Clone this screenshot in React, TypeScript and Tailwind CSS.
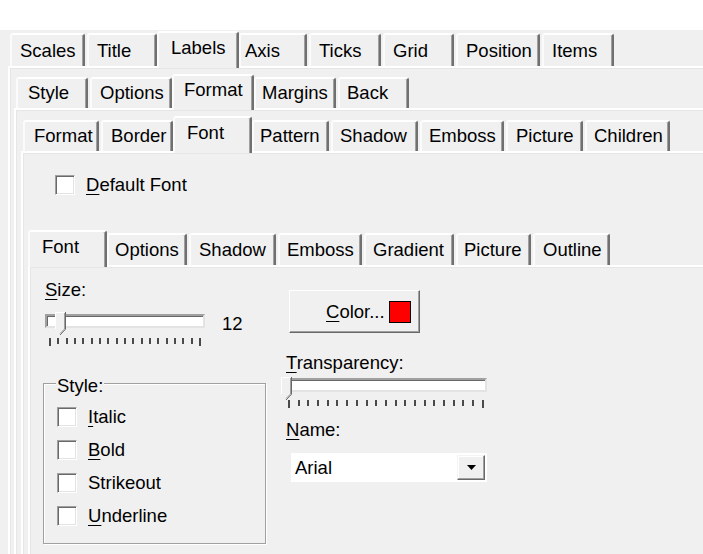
import React from 'react';

type TabDef = { label: string; cls: string; sel?: boolean };

const TAB =
  "relative shrink-0 flex flex-col justify-end whitespace-nowrap leading-[21px] rounded-t-[3px] border-t-2 border-l-2 border-r-2 border-t-white border-l-[#fbfbfb] border-r-[#707070] shadow-[inset_-1px_0_0_#a0a0a0] bg-[#f0f0f0]";

function TabStrip({ tabs, h, unsel, sel }: { tabs: TabDef[]; h: string; unsel: string; sel: string }) {
  return (
    <div className={`flex items-end ${h}`}>
      {tabs.map((t) => (
        <div
          key={t.label}
          className={`${TAB} ${t.cls} ${t.sel ? `z-10 -mb-[2px] pb-[10px] ${sel}` : `pb-[5px] ${unsel}`}`}
        >
          <span>{t.label}</span>
        </div>
      ))}
    </div>
  );
}

const row1: TabDef[] = [
  { label: 'Scales', cls: 'ml-[2px] w-[75px] pl-[8px]' },
  { label: 'Title', cls: 'ml-[2px] w-[70px] pl-[8px]' },
  { label: 'Labels', cls: 'ml-0 w-[82px] pl-[12px]', sel: true },
  { label: 'Axis', cls: 'ml-0 w-[68px] pl-[4px]' },
  { label: 'Ticks', cls: 'ml-[2px] w-[72px] pl-[8px]' },
  { label: 'Grid', cls: 'ml-[2px] w-[71px] pl-[8px]' },
  { label: 'Position', cls: 'ml-[2px] w-[84px] pl-[8px]' },
  { label: 'Items', cls: 'ml-[2px] w-[72px] pl-[8px]' },
];

const row2: TabDef[] = [
  { label: 'Style', cls: 'ml-[2px] w-[72px] pl-[10px]' },
  { label: 'Options', cls: 'ml-[2px] w-[82px] pl-[8px]' },
  { label: 'Format', cls: 'ml-0 w-[82px] pl-[10px]', sel: true },
  { label: 'Margins', cls: 'ml-0 w-[82px] pl-[6px]' },
  { label: 'Back', cls: 'ml-[2px] w-[71px] pl-[7px]' },
];

const row3: TabDef[] = [
  { label: 'Format', cls: 'ml-[2px] w-[76px] pl-[9px]' },
  { label: 'Border', cls: 'ml-[2px] w-[72px] pl-[8px]' },
  { label: 'Font', cls: 'ml-0 w-[79px] pl-[12px]', sel: true },
  { label: 'Pattern', cls: 'ml-0 w-[77px] pl-[6px]' },
  { label: 'Shadow', cls: 'ml-[2px] w-[87px] pl-[7px]' },
  { label: 'Emboss', cls: 'ml-[2px] w-[84px] pl-[7px]' },
  { label: 'Picture', cls: 'ml-[2px] w-[77px] pl-[8px]' },
  { label: 'Children', cls: 'ml-[2px] w-[85px] pl-[7px]' },
];

const row4: TabDef[] = [
  { label: 'Font', cls: 'ml-0 w-[79px] pl-[12px]', sel: true },
  { label: 'Options', cls: 'ml-0 w-[80px] pl-[6px]' },
  { label: 'Shadow', cls: 'ml-[2px] w-[87px] pl-[8px]' },
  { label: 'Emboss', cls: 'ml-[2px] w-[84px] pl-[7px]' },
  { label: 'Gradient', cls: 'ml-[2px] w-[90px] pl-[7px]' },
  { label: 'Picture', cls: 'ml-[2px] w-[75px] pl-[6px]' },
  { label: 'Outline', cls: 'ml-[2px] w-[77px] pl-[8px]' },
];

const PANEL =
  "w-[720px] h-[620px] border-t-2 border-l-2 border-t-white border-l-white shadow-[inset_1px_1px_0_#e6e6e6]";

function Mn({ text, i }: { text: string; i: number }) {
  return (
    <span className="whitespace-nowrap">
      {text.slice(0, i)}
      <span className="underline underline-offset-[3px] decoration-1">{text[i]}</span>
      {text.slice(i + 1)}
    </span>
  );
}

function CheckBox({ children, gap }: { children: React.ReactNode; gap: string }) {
  return (
    <div className="flex items-start h-[21px] leading-[21px]">
      <div className="mt-[1px] w-[20px] h-[20px] shrink-0 bg-white border border-t-[#a0a0a0] border-l-[#a0a0a0] border-b-white border-r-white shadow-[inset_1px_1px_0_#696969,inset_-1px_-1px_0_#e3e3e3]" />
      <div className={gap}>{children}</div>
    </div>
  );
}

function Thumb({ pos }: { pos: string }) {
  return (
    <svg className={`absolute ${pos}`} width="11" height="24" viewBox="0 0 11 24">
      <polygon points="0,0 10,0 10,17 5,22 0,17" fill="#f0f0f0" />
      <polyline points="0.5,17 0.5,0.5 10,0.5" fill="none" stroke="#ffffff" />
      <polyline points="9.5,1 9.5,17 5,21.5" fill="none" stroke="#a0a0a0" />
      <polyline points="10.5,0 10.5,17.2 5,23" fill="none" stroke="#696969" />
    </svg>
  );
}

function Track({ cls, thumb }: { cls: string; thumb: string }) {
  return (
    <div
      className={`relative h-[14px] bg-white border-2 border-t-[#a0a0a0] border-l-[#a0a0a0] border-b-[#e3e3e3] border-r-[#e3e3e3] shadow-[inset_1px_1px_0_#696969] ${cls}`}
    >
      <Thumb pos={thumb} />
    </div>
  );
}

function Ticks({ n, cls }: { n: number; cls: string }) {
  return (
    <div className={`flex justify-between items-start h-[8px] ${cls}`}>
      {Array.from({ length: n }).map((_, k) => (
        <div
          key={k}
          className={
            k === 0 || k === n - 1 ? 'w-[2px] h-[8px] bg-[#4a4a4a]' : 'w-[2px] h-[6px] bg-[#4a4a4a]'
          }
        />
      ))}
    </div>
  );
}

export default function App() {
  return (
    <div className="w-[703px] h-[554px] overflow-hidden bg-[#f0f0f0] text-black text-[18.5px] leading-[21px] font-['Liberation_Sans',Arial,sans-serif]">
      <div className="h-[30px] bg-white" />
      <div className="h-[1px]" />
      <div className="pl-[8px]">
        <TabStrip tabs={row1} h="h-[35px]" unsel="h-[33px]" sel="h-[37px]" />
        <div className={`${PANEL} pl-[4px] pt-[6px]`}>
          <TabStrip tabs={row2} h="h-[34px]" unsel="h-[31px]" sel="h-[36px]" />
          <div className={`${PANEL} pl-[5px] pt-[6px]`}>
            <TabStrip tabs={row3} h="h-[35px]" unsel="h-[31px]" sel="h-[37px]" />
            <div className={`${PANEL} pl-[5px] pt-[21px]`}>
              <div className="ml-[27px]">
                <CheckBox gap="ml-[11px]">
                  <Mn text="Default Font" i={0} />
                </CheckBox>
              </div>
              <div className="mt-[35px]">
                <TabStrip tabs={row4} h="h-[35px]" unsel="h-[32px]" sel="h-[37px]" />
              </div>
              <div className={`${PANEL} pl-[13px]`}>
                <div className="flex">
                  {/* left column */}
                  <div className="w-[223px] pt-[12px]">
                    <div className="ml-[2px] h-[21px]">
                      <Mn text="Size:" i={0} />
                    </div>
                    <div className="mt-[13px] flex items-start h-[21px]">
                      <Track cls="ml-[2px] mt-[1px] w-[160px]" thumb="left-[8px] top-[-4px]" />
                      <span className="ml-[17px]">12</span>
                    </div>
                    <Ticks n={19} cls="mt-[4px] ml-[6px] w-[152px]" />
                    <div className="relative mt-[37px] w-[223px] h-[161px] border border-[#a0a0a0] shadow-[inset_1px_1px_0_#ffffff,1px_1px_0_#ffffff] pl-[13px] pt-[22px]">
                      <span className="absolute left-[12px] top-[-9px] px-[1px] bg-[#f0f0f0] leading-[21px]">
                        Style:
                      </span>
                      <div className="flex flex-col gap-[12px]">
                        <CheckBox gap="ml-[11px]">
                          <Mn text="Italic" i={0} />
                        </CheckBox>
                        <CheckBox gap="ml-[11px]">
                          <Mn text="Bold" i={0} />
                        </CheckBox>
                        <CheckBox gap="ml-[11px]">
                          <span>Strikeout</span>
                        </CheckBox>
                        <CheckBox gap="ml-[11px]">
                          <Mn text="Underline" i={0} />
                        </CheckBox>
                      </div>
                    </div>
                  </div>
                  {/* right column */}
                  <div className="ml-[20px] pt-[23px] w-[210px]">
                    <div className="ml-[3px] w-[131px] h-[43px] flex items-center pl-[36px] border border-t-white border-l-white border-r-[#696969] border-b-[#696969] shadow-[inset_-1px_-1px_0_#a0a0a0] bg-[#f0f0f0]">
                      <Mn text="Color..." i={0} />
                      <div className="ml-[4px] w-[22px] h-[22px] border border-black bg-[#ff0000]" />
                    </div>
                    <div className="mt-[19px] h-[21px]">
                      <Mn text="Transparency:" i={0} />
                    </div>
                    <Track cls="mt-[5px] w-[201px]" thumb="left-[-7px] top-[-3px]" />
                    <Ticks n={21} cls="mt-[8px] ml-[2px] w-[196px]" />
                    <div className="mt-[11px] h-[21px]">
                      <Mn text="Name:" i={0} />
                    </div>
                    <div className="mt-[13px] ml-[5px] w-[196px] h-[29px] bg-white flex items-center justify-between pl-[4px] pr-[2px]">
                      <span>Arial</span>
                      <div className="w-[28px] h-[25px] flex items-center justify-center border border-t-[#f4f4f4] border-l-[#f4f4f4] border-r-[#696969] border-b-[#696969] shadow-[inset_-1px_-1px_0_#a0a0a0,inset_1px_1px_0_#ffffff] bg-[#f0f0f0]">
                        <svg width="9" height="5" viewBox="0 0 9 5">
                          <polygon points="0,0 9,0 4.5,5" fill="#000" />
                        </svg>
                      </div>
                    </div>
                  </div>
                </div>
              </div>
            </div>
          </div>
        </div>
      </div>
    </div>
  );
}
